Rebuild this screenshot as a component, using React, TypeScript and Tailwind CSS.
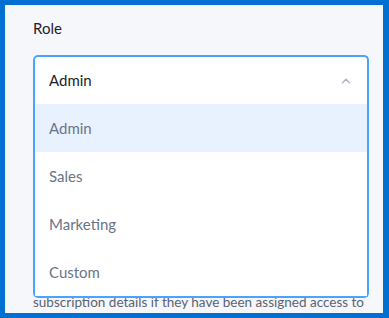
import { ChevronUp } from "lucide-react"

const roles = ["Admin", "Sales", "Marketing", "Custom"]

export default function App() {
  const selected = "Admin"

  return (
    <div className="h-[318px] w-[389px] overflow-hidden border-[5px] border-r-[6px] border-[#0070d2] bg-[#f5f7fb] font-['Lato',sans-serif]">
      <div className="pl-[28px] pr-[14px] pt-[13px]">
        <label className="block text-[15px] leading-[20px] text-[#1e2228]">Role</label>

        <div className="relative mt-[17px]">
          {/* trigger */}
          <div className="flex h-[49px] items-center justify-between rounded-t-[5px] border-2 border-b-0 border-[#4aa3ff] bg-white pl-[14px] pr-[14px]">
            <span className="text-[15px] text-[#1e2228]">{selected}</span>
            <ChevronUp className="h-[14px] w-[14px] text-[#aeb4bf]" strokeWidth={2.5} />
          </div>

          {/* options list */}
          <div className="absolute left-0 right-0 top-[49px] z-10 rounded-b-[5px] border-2 border-t-0 border-[#4aa3ff] bg-white">
            {roles.map((role) => (
              <div
                key={role}
                className={`flex h-[48px] items-center px-[14px] text-[15px] text-[#6b7487] ${
                  role === selected ? "bg-[#e8f2ff]" : "bg-white"
                }`}
              >
                {role}
              </div>
            ))}
          </div>

          <p className="mt-[188px] whitespace-nowrap text-[13.5px] leading-[20px] text-[#5b6372]">
            subscription details if they have been assigned access to
          </p>
        </div>
      </div>
    </div>
  )
}
